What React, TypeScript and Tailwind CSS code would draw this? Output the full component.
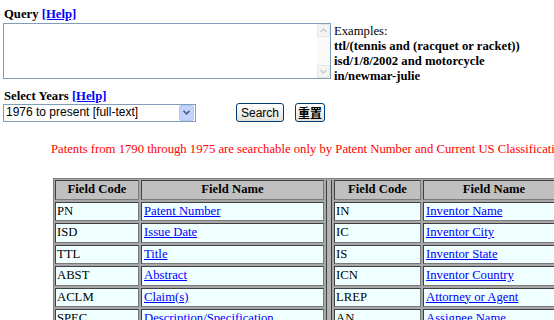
import React from "react";

const left = [
  ["PN", "Patent Number"],
  ["ISD", "Issue Date"],
  ["TTL", "Title"],
  ["ABST", "Abstract"],
  ["ACLM", "Claim(s)"],
  ["SPEC", "Description/Specification"],
];
const right = [
  ["IN", "Inventor Name"],
  ["IC", "Inventor City"],
  ["IS", "Inventor State"],
  ["ICN", "Inventor Country"],
  ["LREP", "Attorney or Agent"],
  ["AN", "Assignee Name"],
];

function Arrow({ up }: { up?: boolean }) {
  return (
    <svg width="7" height="5" viewBox="0 0 7 5">
      <path d={up ? "M0.5 4 L3.5 1 L6.5 4" : "M0.5 1 L3.5 4 L6.5 1"} fill="none" stroke="#c4c9d2" strokeWidth="1.3" />
    </svg>
  );
}

const cellBase = "border border-[#404040] border-r-[#7a7a7a] border-b-[#7a7a7a] leading-[17px] overflow-hidden whitespace-nowrap";

export default function App() {
  return (
    <div className="w-[554px] h-[320px] overflow-hidden bg-white text-black text-[12.7px] leading-[15px]" style={{ fontFamily: '"Liberation Serif", "Times New Roman", serif' }}>
      <div className="pl-[4px] pt-[7px] font-bold">
        Query <a className="text-[#0000ff] underline">[Help]</a>
      </div>
      <div className="flex items-start pl-[3px] mt-[1px]">
        <div className="w-[328px] h-[56px] border border-[#7f9db9] flex">
          <div className="flex-1" />
          <div className="w-[13px] h-full flex flex-col justify-between bg-[#fafaf8]">
            <div className="h-[13px] border border-[#e6e8ee] bg-[#f4f4f0] rounded-[2px] flex items-center justify-center"><Arrow up /></div>
            <div className="h-[13px] border border-[#e6e8ee] bg-[#f4f4f0] rounded-[2px] flex items-center justify-center"><Arrow /></div>
          </div>
        </div>
        <div className="ml-[3px] mt-[1px]">
          <div>Examples:</div>
          <div className="font-bold">ttl/(tennis and (racquet or racket))</div>
          <div className="font-bold">isd/1/8/2002 and motorcycle</div>
          <div className="font-bold">in/newmar-julie</div>
        </div>
      </div>
      <div className="pl-[4px] mt-[5px] font-bold">
        Select Years <a className="text-[#0000ff] underline">[Help]</a>
      </div>
      <div className="flex items-center pl-[3px] -mt-[1px] h-[19px]" style={{ fontFamily: '"Liberation Sans", Arial, sans-serif' }}>
        <div className="w-[193px] h-[18px] border border-[#7f9db9] flex items-center text-[12px]">
          <span className="flex-1 pl-[2px]">1976 to present [full-text]</span>
          <div className="w-[15px] h-[16px] mr-[1px] rounded-[2px] bg-[#c3d3fd] border border-[#b6c8f4] flex items-center justify-center">
            <svg width="7" height="5" viewBox="0 0 7 5"><path d="M0.5 0.8 L3.5 3.8 L6.5 0.8" fill="none" stroke="#4d6185" strokeWidth="1.6" /></svg>
          </div>
        </div>
        <button className="ml-[40px] w-[48px] h-[19px] border border-[#003c74] rounded-[3px] bg-gradient-to-b from-white to-[#e3e2da] text-[12px] leading-[16px]">Search</button>
        <button className="ml-[11px] w-[30px] h-[19px] border border-[#003c74] rounded-[3px] bg-gradient-to-b from-white to-[#e3e2da] text-[12px] leading-[16px] font-bold" style={{ fontFamily: '"Noto Sans CJK TC", "Noto Sans CJK SC", sans-serif' }}>重置</button>
      </div>
      <div className="pl-[51px] mt-[20px] text-[#ff0000] whitespace-nowrap">
        Patents from 1790 through 1975 are searchable only by Patent Number and Current US Classification
      </div>
      <div className="ml-[53px] mt-[21px] w-[600px] border border-[#808080] border-r-0 bg-[#a8a8a8] p-[1px] pr-0 grid grid-cols-[84px_183px_6px_87px_142px] auto-rows-[19.5px] gap-[2px]">
        <div className={`${cellBase} bg-[#c0c0c0] font-bold text-center`}>Field Code</div>
        <div className={`${cellBase} bg-[#c0c0c0] font-bold text-center`}>Field Name</div>
        <div className="row-span-7 border-x border-[#404040] bg-[#b4b4b4]" />
        <div className={`${cellBase} bg-[#c0c0c0] font-bold text-center`}>Field Code</div>
        <div className={`${cellBase} bg-[#c0c0c0] font-bold text-center`}>Field Name</div>
        {left.map((l, i) => (
          <React.Fragment key={l[0]}>
            <div className={`${cellBase} bg-[#f0ffff] pl-[1px]`}>{l[0]}</div>
            <div className={`${cellBase} bg-[#f0ffff] pl-[2px]`}><a className="text-[#0000ff] underline">{l[1]}</a></div>
            <div className={`${cellBase} bg-[#f0ffff] pl-[1px]`}>{right[i][0]}</div>
            <div className={`${cellBase} bg-[#f0ffff] pl-[2px]`}><a className="text-[#0000ff] underline">{right[i][1]}</a></div>
          </React.Fragment>
        ))}
      </div>
    </div>
  );
}
